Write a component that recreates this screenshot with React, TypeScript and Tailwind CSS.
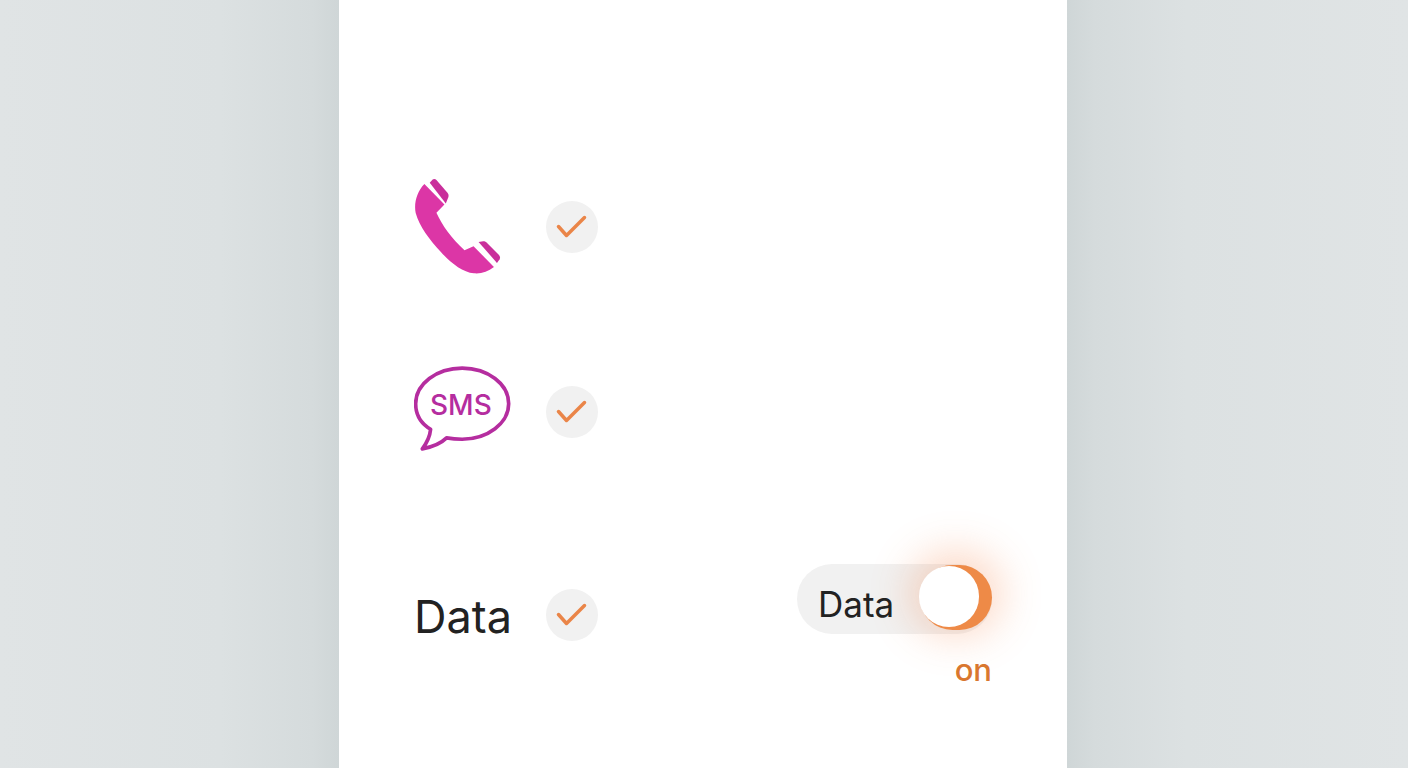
const fontClass = "font-['Inter','Liberation_Sans',sans-serif]";

function CheckBadge() {
  return (
    <div className="flex h-[52px] w-[52px] shrink-0 items-center justify-center rounded-full bg-[#f1f1f1]">
      <svg width="52" height="52" viewBox="0 0 52 52" fill="none">
        <path
          d="M12.5 25.5 L20.5 34.5 L38.5 16.5"
          stroke="#ea8548"
          strokeWidth="3.5"
          strokeLinecap="round"
          strokeLinejoin="round"
        />
      </svg>
    </div>
  );
}

function PhoneIcon() {
  return (
    <svg width="87" height="97" viewBox="69 50 260 290">
      <path
        d="M100 68 L160 129 L136 154 C152 190 182 232 220 266 L247 254 L308 316 C290 330 270 337 248 335 C215 332 180 305 150 272 C115 235 85 195 74 155 C68 125 78 90 100 68 Z"
        fill="#dc36a6"
      />
      <path
        d="M116 64 L124 55 C128 52 133 53 136 56 L169 94 C173 99 173 104 171 109 L164 126 Z"
        fill="#c92f9b"
      />
      <path
        d="M262 241 L276 239 C280 239 283 240 286 243 L323 280 C327 285 327 289 325 293 L317 304 Z"
        fill="#c92f9b"
      />
    </svg>
  );
}

function SmsIcon() {
  return (
    <div className="relative h-[85px] w-[98px]">
      <svg width="98" height="85" viewBox="70 48 295 255" fill="none">
        <path
          d="M215 54 C292 54 355 102 355 161 C355 220 292 268 215 268 C200 268 185 267 168 264 C150 282 122 292 95 297 C108 280 118 258 120 238 C90 220 75 192 75 161 C75 102 138 54 215 54 Z"
          stroke="#b52d9f"
          strokeWidth="11"
          strokeLinejoin="round"
        />
      </svg>
      <span className="absolute left-[16px] top-[23px] text-[28px] font-[450] leading-[33px] text-[#b52d9f]">SMS</span>
    </div>
  );
}

function DataToggle() {
  return (
    <div className="flex flex-col items-end">
      <div className="relative flex h-[70px] w-[195px] items-center rounded-full bg-[#f1f1f1] pl-[21px] pt-[10px] text-[35px] leading-none text-[#222222]">
        <div className="absolute right-0 top-[1px] h-[65px] w-[72px] rounded-full bg-[#ee8a47] shadow-[0_-4px_40px_10px_rgba(245,130,70,0.3)]" />
        <span className="relative">Data</span>
        <div className="absolute right-[13px] top-[2px] h-[61px] w-[60px] rounded-full bg-white" />
      </div>
      <span className="mt-[18px] text-[31px] font-[450] leading-[36px] text-[#d9772f]">on</span>
    </div>
  );
}

export default function App() {
  return (
    <div className={`flex h-screen w-full overflow-hidden ${fontClass}`}>
      <div className="w-[339px] bg-[linear-gradient(90deg,#e0e4e5_0%,#dce1e2_65%,#d5dbdc_92%,#cfd6d7_100%)]" />
      <main className="flex w-[728px] flex-col bg-white px-[75px] pt-[177px]">
        <div className="flex h-[99px] items-center">
          <div className="w-[132px]">
            <PhoneIcon />
          </div>
          <CheckBadge />
        </div>
        <div className="mt-[90px] flex h-[92px] items-center">
          <div className="h-full w-[132px]">
            <SmsIcon />
          </div>
          <CheckBadge />
        </div>
        <div className="mt-[106px] flex items-start justify-between">
          <div className="flex h-[102px] items-center">
            <div className="w-[132px] pt-[2px] text-[45px] leading-none text-[#222222]">Data</div>
            <CheckBadge />
          </div>
          <DataToggle />
        </div>
      </main>
      <div className="w-[341px] bg-[linear-gradient(270deg,#e0e4e5_0%,#dce1e2_65%,#d5dbdc_92%,#cfd6d7_100%)]" />
    </div>
  );
}
